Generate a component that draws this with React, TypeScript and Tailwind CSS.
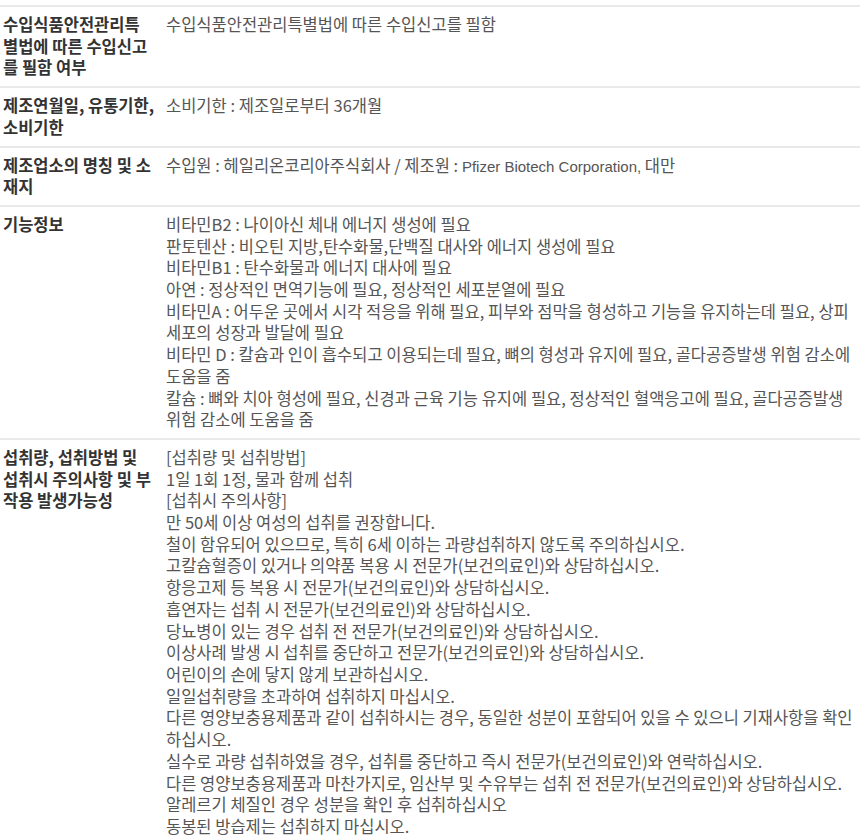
import type { ReactNode } from "react";

const latin = '"Liberation Sans", "Noto Sans CJK KR", sans-serif';

// 항목명은 원본 줄바꿈 위치 그대로
const rows: { label: string[]; lines: ReactNode[] }[] = [
  {
    label: ["수입식품안전관리특", "별법에 따른 수입신고", "를 필함 여부"],
    lines: ["수입식품안전관리특별법에 따른 수입신고를 필함"],
  },
  {
    label: ["제조연월일, 유통기한,", "소비기한"],
    lines: ["소비기한 : 제조일로부터 36개월"],
  },
  {
    label: ["제조업소의 명칭 및 소", "재지"],
    lines: [
      <>
        수입원 : 헤일리온코리아주식회사 / 제조원 :{" "}
        <span className="text-[15px]" style={{ fontFamily: latin }}>
          Pfizer Biotech Corporation,
        </span>{" "}
        대만
      </>,
    ],
  },
  {
    label: ["기능정보"],
    lines: [
      "비타민B2 : 나이아신 체내 에너지 생성에 필요",
      "판토텐산 : 비오틴 지방,탄수화물,단백질 대사와 에너지 생성에 필요",
      "비타민B1 : 탄수화물과 에너지 대사에 필요",
      "아연 : 정상적인 면역기능에 필요, 정상적인 세포분열에 필요",
      "비타민A : 어두운 곳에서 시각 적응을 위해 필요, 피부와 점막을 형성하고 기능을 유지하는데 필요, 상피세포의 성장과 발달에 필요",
      "비타민 D : 칼슘과 인이 흡수되고 이용되는데 필요, 뼈의 형성과 유지에 필요, 골다공증발생 위험 감소에 도움을 줌",
      "칼슘 : 뼈와 치아 형성에 필요, 신경과 근육 기능 유지에 필요, 정상적인 혈액응고에 필요, 골다공증발생 위험 감소에 도움을 줌",
    ],
  },
  {
    label: ["섭취량, 섭취방법 및", "섭취시 주의사항 및 부", "작용 발생가능성"],
    lines: [
      "[섭취량 및 섭취방법]",
      "1일 1회 1정, 물과 함께 섭취",
      "[섭취시 주의사항]",
      "만 50세 이상 여성의 섭취를 권장합니다.",
      "철이 함유되어 있으므로, 특히 6세 이하는 과량섭취하지 않도록 주의하십시오.",
      "고칼슘혈증이 있거나 의약품 복용 시 전문가(보건의료인)와 상담하십시오.",
      "항응고제 등 복용 시 전문가(보건의료인)와 상담하십시오.",
      "흡연자는 섭취 시 전문가(보건의료인)와 상담하십시오.",
      "당뇨병이 있는 경우 섭취 전 전문가(보건의료인)와 상담하십시오.",
      "이상사례 발생 시 섭취를 중단하고 전문가(보건의료인)와 상담하십시오.",
      "어린이의 손에 닿지 않게 보관하십시오.",
      "일일섭취량을 초과하여 섭취하지 마십시오.",
      "다른 영양보충용제품과 같이 섭취하시는 경우, 동일한 성분이 포함되어 있을 수 있으니 기재사항을 확인하십시오.",
      "실수로 과량 섭취하였을 경우, 섭취를 중단하고 즉시 전문가(보건의료인)와 연락하십시오.",
      "다른 영양보충용제품과 마찬가지로, 임산부 및 수유부는 섭취 전 전문가(보건의료인)와 상담하십시오.",
      "알레르기 체질인 경우 성분을 확인 후 섭취하십시오",
      "동봉된 방습제는 섭취하지 마십시오.",
    ],
  },
];

export default function App() {
  return (
    <div
      className="w-[860px] h-[839px] overflow-hidden bg-white pt-[5px] text-[16.5px] leading-[21.7px]"
      style={{ fontFamily: '"Noto Sans CJK KR", "Liberation Sans", sans-serif' }}
    >
      {rows.map((row) => (
        <div key={row.label.join("")} className="flex border-t-2 border-[#e9e9e9] py-[7px]">
          {/* 항목명 */}
          <div className="w-[166px] shrink-0 pl-[3px] font-bold text-[#333] whitespace-nowrap">
            {row.label.map((l) => (
              <div key={l}>{l}</div>
            ))}
          </div>
          {/* 내용 */}
          <div className="flex-1 min-w-0 text-[#555]">
            {row.lines.map((line, i) => (
              <div key={i}>{line}</div>
            ))}
          </div>
        </div>
      ))}
    </div>
  );
}
